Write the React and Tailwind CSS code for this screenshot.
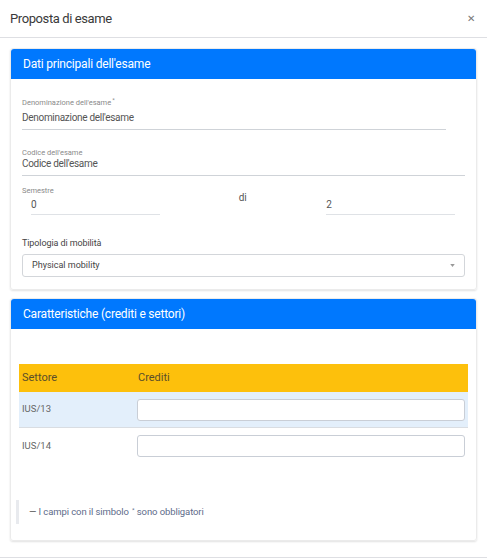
import React from 'react';

const font = { fontFamily: 'Roboto, "Liberation Sans", sans-serif' };

const Star = () => <span className="relative -top-[3px] text-[6px] leading-none ml-[1px]">*</span>;

const Underlined = ({ label, value, star, className, gap }) => (
  <div className={className}>
    <div className="h-[8px] text-[7.5px] leading-[8px] text-[#8a8a8a]">
      {label}
      {star && <Star />}
    </div>
    <div className={`${gap} pb-[4px] text-[10px] leading-[14px] tracking-[-0.3px] text-[#555] border-b border-[#cfd3d8]`}>
      {value}
    </div>
  </div>
);

const CardHeader = ({ children }) => (
  <div className="h-[30px] bg-[#0078fe] px-[12px] flex items-center text-[12px] tracking-[-0.2px] text-white rounded-t-[3px]">
    {children}
  </div>
);

const rows = [
  { code: 'IUS/13', bg: 'bg-[#e3effb]' },
  { code: 'IUS/14', bg: 'bg-white' },
];

export default function App() {
  return (
    <div className="w-[487px] h-[559px] bg-white overflow-hidden flex flex-col" style={font}>
      {/* modal header */}
      <div className="h-[38px] shrink-0 flex items-center justify-between px-[10px] border-b border-[#dedfe3]">
        <span className="text-[13px] tracking-[-0.4px] text-[#3a3a3a]">Proposta di esame</span>
        <span className="text-[10px] text-[#777] mr-[2px]">✕</span>
      </div>

      <div className="flex-1 px-[10px] pt-[10px]">
        {/* card 1 */}
        <div className="rounded-[3px] border border-[#ebebeb] shadow-[0_1px_2px_rgba(0,0,0,0.12)]">
          <CardHeader>Dati principali dell'esame</CardHeader>
          <div className="px-[11px] pt-[20px] pb-[12px]">
            <Underlined className="w-[424px]" gap="mt-[4px]" label="Denominazione dell'esame" star value="Denominazione dell'esame" />
            <Underlined className="mt-[19px]" gap="mt-0" label="Codice dell'esame" value="Codice dell'esame" />

            <div className="mt-[11px] h-[8px] text-[7.5px] leading-[8px] text-[#8a8a8a]">Semestre</div>
            <div className="grid grid-cols-3">
              <div className="pl-[9px] pr-[10px]">
                <div className="mt-[3px] pb-[2px] text-[10px] leading-[14px] text-[#555] border-b border-[#dfe2e6]">0</div>
              </div>
              <div className="pl-[69px] text-[10px] leading-[14px] text-[#555] -mt-[4px]">di</div>
              <div className="pl-[9px] pr-[10px]">
                <div className="mt-[3px] pb-[2px] text-[10px] leading-[14px] text-[#555] border-b border-[#dfe2e6]">2</div>
              </div>
            </div>

            <div className="mt-[21px] text-[9px] leading-[14px] tracking-[-0.1px] text-[#444]">Tipologia di mobilità</div>
            <div className="mt-[4px] h-[23px] rounded-[3px] border border-[#d3d6da] flex items-center justify-between pl-[9px] pr-[9px]">
              <span className="text-[9px] text-[#444]">Physical mobility</span>
              <svg width="5" height="3" viewBox="0 0 6 4">
                <path d="M0 0 L6 0 L3 4 Z" fill="#999" />
              </svg>
            </div>
          </div>
        </div>

        {/* card 2 */}
        <div className="mt-[8px] rounded-[3px] border border-[#ebebeb] shadow-[0_1px_2px_rgba(0,0,0,0.12)]">
          <CardHeader>Caratteristiche (crediti e settori)</CardHeader>
          <div className="pt-[35px] pb-[16px]">
            <div className="mx-[8px]">
              <div className="h-[28px] bg-[#fdc00c] grid grid-cols-[118px_1fr] items-center text-[11px] text-[#5a4e2a]">
                <span className="pl-[3px]">Settore</span>
                <span className="pl-[1px]">Crediti</span>
              </div>
              {rows.map((r, i) => (
                <div
                  key={r.code}
                  className={`h-[36px] ${r.bg} grid grid-cols-[118px_1fr] items-center ${i === 0 ? 'border-b border-[#d9dde2]' : ''}`}
                >
                  <span className="pl-[3px] text-[9.5px] text-[#666]">{r.code}</span>
                  <div className="pr-[3px]">
                    <div className="h-[22px] bg-white rounded-[3px] border border-[#c9ced6]" />
                  </div>
                </div>
              ))}
            </div>

            <div className="mt-[36px] ml-[5px] h-[24px] border-l-[3px] border-[#e8eaee] pl-[10px] flex items-center text-[9.5px] tracking-[-0.1px]">
              <span className="text-[#444]">—&nbsp;</span>
              <span className="text-[#5d6b8a]">
                I campi con il simbolo <Star /> sono obbligatori
              </span>
            </div>
          </div>
        </div>
      </div>

      <div className="h-[2px] shrink-0 border-t border-[#dedfe3]" />
    </div>
  );
}
